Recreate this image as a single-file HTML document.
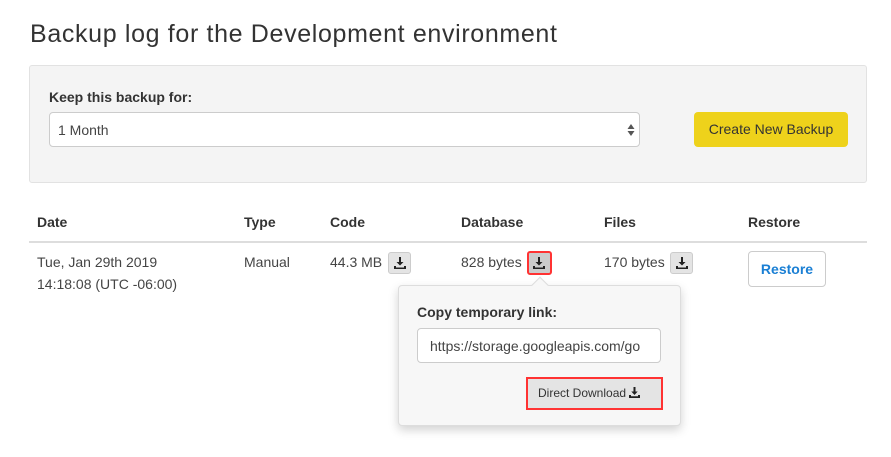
<!DOCTYPE html>
<html><head><style>
*{box-sizing:border-box;margin:0;padding:0}
body{width:891px;height:457px;background:#fff;font-family:"Liberation Sans",sans-serif;color:#333;position:relative;overflow:hidden}
.a{position:absolute;white-space:nowrap}
h1{position:absolute;left:30px;top:20px;font-size:25px;font-weight:normal;color:#333;letter-spacing:0.65px}
.b{font-weight:bold;font-size:14px;color:#333}
.t{font-size:14px;color:#444}
.dl{position:absolute;width:23px;height:22px;background:#e4e4e4;border:1px solid #ccc;border-radius:3px}
.dl svg{position:absolute;left:5px;top:4px}
</style></head><body>
<h1>Backup log for the Development environment</h1>
<div class="a" style="left:29px;top:65px;width:838px;height:118px;background:#f4f4f4;border:1px solid #e2e2e2;border-radius:3px"></div>
<div class="a b" style="left:49px;top:89px">Keep this backup for:</div>
<div class="a" style="left:49px;top:112px;width:591px;height:35px;background:#fff;border:1px solid #ccc;border-radius:4px"></div>
<div class="a t" style="left:58px;top:122px">1 Month</div>
<svg class="a" style="left:627px;top:124px" width="8" height="12"><path d="M4 0L7.5 5H0.5Z M4 12L7.5 7H0.5Z" fill="#555"/></svg>
<div class="a" style="left:694px;top:112px;width:154px;height:35px;background:#eed21b;border-radius:4px;font-size:14px;color:#333;text-align:center;line-height:35px">Create New Backup</div>
<div class="a b" style="left:37px;top:214px">Date</div>
<div class="a b" style="left:244px;top:214px">Type</div>
<div class="a b" style="left:330px;top:214px">Code</div>
<div class="a b" style="left:461px;top:214px">Database</div>
<div class="a b" style="left:604px;top:214px">Files</div>
<div class="a b" style="left:748px;top:214px">Restore</div>
<div class="a" style="left:29px;top:241px;width:838px;height:2px;background:#ddd"></div>
<div class="a t" style="left:37px;top:254px">Tue, Jan 29th 2019</div>
<div class="a t" style="left:37px;top:276px">14:18:08 (UTC -06:00)</div>
<div class="a t" style="left:244px;top:254px">Manual</div>
<div class="a t" style="left:330px;top:254px">44.3 MB</div>
<div class="dl" style="left:388px;top:252px"><svg width="12" height="12"><path d="M5 0h2v5h2.5L6 8.5 2.5 5H5z M0 9h2v1.5h8V9h2v3H0z" fill="#222"/></svg></div>
<div class="a t" style="left:461px;top:254px">828 bytes</div>
<div class="dl" style="left:527px;top:251px;width:25px;height:24px;border:2px solid #f33;background:#ccc"><svg width="12" height="12" style="left:4px;top:4px"><path d="M5 0h2v5h2.5L6 8.5 2.5 5H5z M0 9h2v1.5h8V9h2v3H0z" fill="#222"/></svg></div>
<div class="a t" style="left:604px;top:254px">170 bytes</div>
<div class="dl" style="left:670px;top:252px"><svg width="12" height="12"><path d="M5 0h2v5h2.5L6 8.5 2.5 5H5z M0 9h2v1.5h8V9h2v3H0z" fill="#222"/></svg></div>
<div class="a" style="left:748px;top:251px;width:78px;height:36px;border:1px solid #ccc;border-radius:4px;color:#1a7fd4;font-weight:bold;font-size:14px;text-align:center;line-height:34px">Restore</div>
<div class="a" style="left:398px;top:285px;width:283px;height:141px;background:#f7f7f7;border:1px solid #ddd;border-radius:4px;box-shadow:0 4px 10px rgba(0,0,0,.18)"></div>
<div class="a" style="left:534px;top:279px;width:12px;height:12px;background:#f7f7f7;border-left:1px solid #ddd;border-top:1px solid #ddd;transform:rotate(45deg)"></div>
<div class="a b" style="left:417px;top:304px">Copy temporary link:</div>
<div class="a" style="left:417px;top:328px;width:244px;height:35px;background:#fff;border:1px solid #ccc;border-radius:4px;overflow:hidden"><div class="a t" style="left:12px;top:9px">https://storage.googleapis.com/go</div></div>
<div class="a" style="left:526px;top:377px;width:137px;height:33px;background:#e4e4e4;border:2px solid #f33;font-size:12px;color:#333;line-height:29px;padding-left:10px">Direct Download <svg width="11" height="11" style="vertical-align:-1px"><path d="M4.5 0h2v4.5h2.2L5.5 8 2.3 4.5h2.2z M0 8h2v1.3h7V8h2v3H0z" fill="#222"/></svg></div>
</body></html>
